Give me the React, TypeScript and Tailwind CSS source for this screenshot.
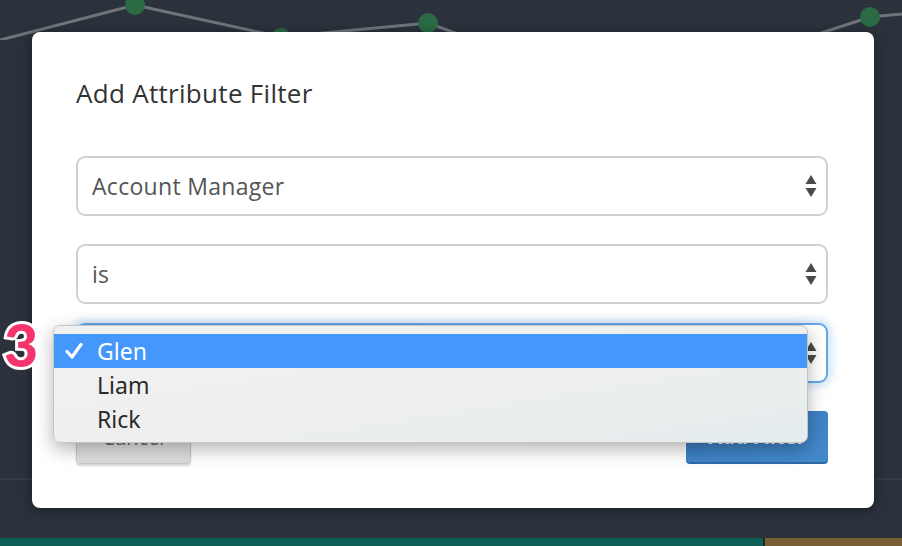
function Arrows() {
  return (
    <svg width="12" height="24" viewBox="0 0 12 24" className="shrink-0">
      <path d="M6 1 L11.5 10 L0.5 10 Z" fill="#4a4a4a" />
      <path d="M6 23 L11.5 14 L0.5 14 Z" fill="#4a4a4a" />
    </svg>
  )
}

function SelectBox({ value, focused }: { value: string; focused?: boolean }) {
  return (
    <div
      className={`h-[60px] flex items-center justify-between pl-[14px] pr-[9px] rounded-[9px] border-2 bg-white ${
        focused ? 'border-[#64a6e6] shadow-[0_0_8px_3px_rgba(100,166,230,0.35)]' : 'border-[#d2d2d2]'
      }`}
    >
      <span className="text-[23px] text-[#555] tracking-[0.3px]">{value}</span>
      <Arrows />
    </div>
  )
}

export default function App() {
  const options = ['Glen', 'Liam', 'Rick']
  return (
    <div className="relative w-[902px] h-[546px] overflow-hidden bg-[#2b323c] font-['Open_Sans',sans-serif]">
      <svg className="absolute left-0 top-0" width="902" height="40" viewBox="0 0 902 40">
        <g stroke="#6f7479" strokeWidth="3" fill="none">
          <polyline points="0,40 135,5 281,37 428,23 480,42" />
          <polyline points="800,40 870,17 902,14" />
        </g>
        <g fill="#2a6b45">
          <circle cx="135" cy="5" r="10" />
          <circle cx="281" cy="38" r="10" />
          <circle cx="428" cy="23" r="10" />
          <circle cx="870" cy="17" r="10" />
        </g>
      </svg>

      <div className="absolute left-0 right-0 top-[478px] h-[2px] bg-[#353c46]" />

      <div className="absolute left-0 right-0 bottom-0 h-[8px] flex">
        <div className="flex-1 bg-[#0c5e57]" />
        <div className="w-[2px] bg-[#1e2a2a]" />
        <div className="w-[137px] bg-[#786036]" />
      </div>

      <div className="absolute left-[32px] top-[32px] w-[842px] h-[476px] bg-white rounded-[8px] pl-[44px] pr-[46px] pt-[45px] flex flex-col shadow-[0_2px_12px_rgba(0,0,0,0.4)]">
        <h2 className="text-[26px] leading-[32px] text-[#333] tracking-[0.3px]">Add Attribute Filter</h2>
        <div className="mt-[47px] flex flex-col gap-[28px]">
          <SelectBox value="Account Manager" />
          <SelectBox value="is" />
        </div>
        <div className="mt-[19px]">
          <SelectBox value="" focused />
        </div>
        <div className="mt-[28px] flex justify-between">
          <button className="w-[115px] h-[53px] rounded-[4px] border border-[#c8c8c8] bg-gradient-to-b from-[#f2f2f2] to-[#dcdcdc] text-[20px] text-[#666] shadow-[0_2px_2px_rgba(0,0,0,0.15)]">
            Cancel
          </button>
          <button className="w-[142px] h-[53px] rounded-[4px] bg-gradient-to-br from-[#3a7bbf] to-[#438acb] border-b-2 border-[#2f6aa6] text-[20px] text-white font-bold">
            Add Filter
          </button>
        </div>
      </div>

      <div className="absolute left-[53px] top-[325px] w-[755px] h-[118px] rounded-[7px] bg-gradient-to-br from-[#f1f1f1] via-[#efefef] to-[#e4eced] border border-[#c4c4c4] shadow-[0_6px_18px_rgba(0,0,0,0.3)] pt-[8px] font-['Noto_Sans',sans-serif]">
        {options.map((o, i) => (
          <div
            key={o}
            className={`h-[34px] flex items-center text-[23px] ${i === 0 ? 'bg-[#4497fb] text-white' : 'text-[#2a2a2a]'}`}
          >
            <span className="w-[43px] pl-[11px] flex items-center">
              {i === 0 && (
                <svg width="18" height="18" viewBox="0 0 18 18">
                  <path d="M2 9.5 L7 15 L16 2.5" fill="none" stroke="white" strokeWidth="3.2" strokeLinecap="round" strokeLinejoin="round" />
                </svg>
              )}
            </span>
            <span className="leading-none">{o}</span>
          </div>
        ))}
      </div>

      <div className="absolute left-[4px] top-[315px] text-[59px] font-black leading-none text-[#f5336c] [-webkit-text-stroke:6px_white] [paint-order:stroke_fill] font-['Lato',sans-serif]">
        3
      </div>
    </div>
  )
}
